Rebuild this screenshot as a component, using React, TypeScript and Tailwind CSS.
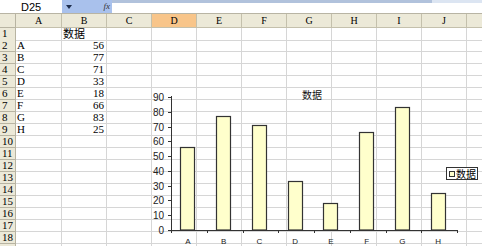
import React from "react";

const cols = ["A", "B", "C", "D", "E", "F", "G", "H", "I", "J", "K"];
const data: [string, number][] = [
  ["A", 56],
  ["B", 77],
  ["C", 71],
  ["D", 33],
  ["E", 18],
  ["F", 66],
  ["G", 83],
  ["H", 25],
];

const rows = Array.from({ length: 19 }, (_, i) => i + 1);

// chart geometry (pixels in page space)
const axisX = 171;
const axisY = 230;
const unit = 1.478;
const catW = 35.75;

function Chart() {
  const ticks = [0, 10, 20, 30, 40, 50, 60, 70, 80, 90];
  return (
    <svg
      className="absolute left-0 top-0 pointer-events-none"
      width={482}
      height={246}
      style={{ fontFamily: '"Liberation Sans", Arial, sans-serif' }}
    >
      {/* value axis */}
      <line x1={axisX + 0.5} y1={96} x2={axisX + 0.5} y2={axisY} stroke="#333" strokeWidth={1} />
      {ticks.map((t) => {
        const y = Math.round(axisY - t * unit) + 0.5;
        return (
          <g key={t}>
            <line x1={axisX - 3} y1={y} x2={axisX} y2={y} stroke="#333" strokeWidth={1} />
            <text x={164} y={y + 3.5} fontSize={10} textAnchor="end" fill="#222">
              {t}
            </text>
          </g>
        );
      })}

      {/* category axis */}
      <line x1={axisX} y1={axisY + 0.5} x2={457} y2={axisY + 0.5} stroke="#333" strokeWidth={1} />
      {Array.from({ length: 9 }, (_, i) => {
        const x = Math.round(axisX + catW * i) + 0.5;
        return <line key={i} x1={x} y1={axisY} x2={x} y2={axisY + 3} stroke="#333" strokeWidth={1} />;
      })}

      {data.map(([label, v], i) => {
        const cx = axisX + catW * (i + 0.5);
        const top = axisY - v * unit;
        return (
          <g key={label}>
            <rect
              x={Math.round(cx - 8.5) + 0.5}
              y={Math.round(top) + 0.5}
              width={14}
              height={axisY - Math.round(top) - 0.5}
              fill="#ffffcc"
              stroke="#333"
              strokeWidth={1.2}
            />
            <text x={cx - 1} y={244} fontSize={8} textAnchor="middle" fill="#222">
              {label}
            </text>
          </g>
        );
      })}

      <text
        x={312}
        y={99}
        fontSize={10}
        textAnchor="middle"
        fill="#111"
        style={{ fontFamily: '"Noto Sans CJK SC", sans-serif' }}
      >
        数据
      </text>
    </svg>
  );
}

export default function App() {
  return (
    <div className="relative w-[482px] h-[246px] overflow-hidden bg-white text-black">
      {/* name box + formula bar */}
      <div className="flex h-[14px] border-b border-[#b8b4a4]">
        <div className="w-[62px] bg-white pl-[21px] pt-[2px] text-[11px] leading-[11px] font-['Liberation_Sans',sans-serif]">
          D25
        </div>
        <div className="w-[50px] bg-[#a9c1ec] flex items-center justify-between pl-[4px] pr-[2px]">
          <svg width="6" height="4" viewBox="0 0 6 4">
            <path d="M0 0 L6 0 L3 4 Z" fill="#1c2c4c" />
          </svg>
          <span className="text-[9px] leading-none italic font-['Liberation_Serif',serif] text-[#333]">fx</span>
        </div>
        <div className="flex-1 flex flex-col">
          <div className="h-[3px] flex">
            <div className="w-[320px] bg-[#b1c2dc]" />
            <div className="flex-1 bg-[#dce5f2]" />
          </div>
          <div className="flex-1 bg-white" />
        </div>
      </div>

      {/* column headers */}
      <div className="grid grid-cols-[16px_46px_repeat(11,45px)] h-[14px]">
        <div className="bg-[#ece9d8] border-r border-b border-[#b8b4a2]" />
        {cols.map((c) => (
          <div
            key={c}
            className={`flex items-center justify-center overflow-hidden border-r border-b border-[#c4c0ac] text-[10px] leading-none font-['Liberation_Serif',serif] ${
              c === "D" ? "bg-[#f8c58a]" : "bg-[#ece9d8]"
            }`}
          >
            {c === "K" ? "" : c}
          </div>
        ))}
      </div>

      {/* rows */}
      {rows.map((r) => {
        const item = r >= 2 && r <= 9 ? data[r - 2] : null;
        return (
          <div key={r} className="grid grid-cols-[16px_46px_repeat(11,45px)] h-[12px]">
            <div className="bg-[#ece9d8] border-r border-b border-[#b8b4a2] pl-[2px] text-[11px] leading-[11px] font-['Liberation_Serif',serif] overflow-hidden">
              {r === 19 ? "" : r}
            </div>
            {cols.map((c) => (
              <div
                key={c}
                className="border-r border-b border-[#d6d6d6] text-[11px] leading-[11px] font-['Liberation_Serif',serif] whitespace-nowrap"
              >
                {c === "A" && item && <span className="pl-[1px]">{item[0]}</span>}
                {c === "B" && r === 1 && (
                  <span className="pl-[1px] text-[11px] font-['Noto_Sans_CJK_SC',sans-serif]">数据</span>
                )}
                {c === "B" && item && <div className="text-right pr-[2px]">{item[1]}</div>}
              </div>
            ))}
          </div>
        );
      })}

      <Chart />

      {/* legend */}
      <div className="absolute left-[446px] top-[167px] w-[32px] h-[13px] bg-white border border-[#333] flex items-center pl-[2px] gap-[1px]">
        <div className="w-[6px] h-[6px] border border-[#333] bg-[#ffffcc]" />
        <span className="text-[10px] leading-none font-['Noto_Sans_CJK_SC',sans-serif]">数据</span>
      </div>
    </div>
  );
}
